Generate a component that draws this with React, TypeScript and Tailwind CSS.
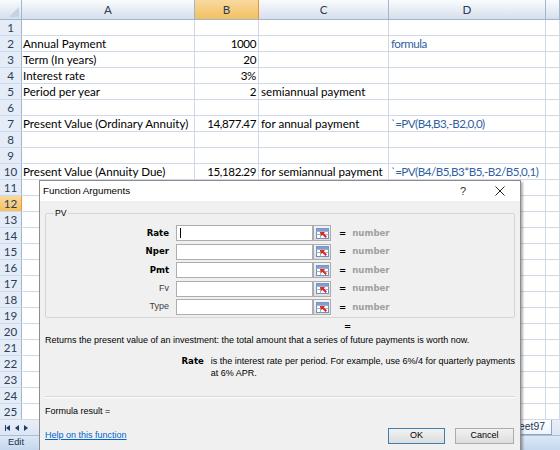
const rows: [string, string, string, string][] = [
  ['', '', '', ''],
  ['Annual Payment', '1000', '', 'formula'],
  ['Term (In years)', '20', '', ''],
  ['Interest rate', '3%', '', ''],
  ['Period per year', '2', 'semiannual payment', ''],
  ['', '', '', ''],
  ['Present Value (Ordinary Annuity)', '14,877.47', 'for annual payment', '`=PV(B4,B3,-B2,0,0)'],
  ['', '', '', ''],
  ['', '', '', ''],
  ['Present Value (Annuity Due)', '15,182.29', 'for semiannual payment', '`=PV(B4/B5,B3*B5,-B2/B5,0,1)'],
  ...Array.from({ length: 15 }, () => ['', '', '', ''] as [string, string, string, string]),
];

const args = [
  { name: 'Rate', bold: true },
  { name: 'Nper', bold: true },
  { name: 'Pmt', bold: true },
  { name: 'Fv', bold: false },
  { name: 'Type', bold: false },
];

function RefIcon() {
  return (
    <svg width="13" height="11" viewBox="0 0 13 11">
      <rect x="0.5" y="0.5" width="12" height="10" fill="#ffffff" stroke="#6f8fbf" />
      <line x1="0.5" y1="3.5" x2="12.5" y2="3.5" stroke="#9bb3d8" />
      <line x1="0.5" y1="6.5" x2="12.5" y2="6.5" stroke="#9bb3d8" />
      <line x1="4.5" y1="0.5" x2="4.5" y2="10.5" stroke="#9bb3d8" />
      <rect x="0.5" y="0.5" width="12" height="2.5" fill="#7e9fd0" />
      <polygon points="4,4 9,4 8,5.5 11,8.5 9.5,10 6.5,7 5,8" fill="#e02a1a" />
    </svg>
  );
}

function Tri({ dir }: { dir: 'l' | 'r' }) {
  return (
    <svg width="4" height="6" viewBox="0 0 4 6">
      {dir === 'l' ? <polygon points="4,0 4,6 0,3" fill="#1f3a66" /> : <polygon points="0,0 0,6 4,3" fill="#1f3a66" />}
    </svg>
  );
}

function Dialog() {
  const body = 'font-["Liberation_Sans",Arial,sans-serif] text-[9px] text-black';
  const bold = 'font-["DejaVu_Sans",Verdana,sans-serif] font-bold text-[8.6px]';
  return (
    <div className="absolute left-[39px] top-[180px] w-[482px] h-[280px] border border-[#8c8c8c] bg-[#f0f0f0] shadow-[2px_2px_2px_rgba(0,0,0,0.3)]">
      <div className="h-[20px] bg-white flex items-center pl-[3px] font-['Liberation_Sans',Arial,sans-serif] text-[9.8px] text-black">
        <span>Function Arguments</span>
        <span className="ml-auto text-[11px] text-[#333]">?</span>
        <svg className="ml-[29px] mr-[15px]" width="10" height="10" viewBox="0 0 10 10">
          <path d="M0.5 0.5 L9.5 9.5 M9.5 0.5 L0.5 9.5" stroke="#222" strokeWidth="1" />
        </svg>
      </div>
      <div className={`px-[5px] ${body}`}>
        <fieldset className="mt-[7px] border border-[#d5d5d5] rounded-[2px] pl-[5px] pt-[7px] pb-[2px]">
          <legend className="ml-[3px] px-[1px] leading-[10px] text-[8.7px]">PV</legend>
          <div className="flex flex-col gap-[2.5px]">
            {args.map((a) => (
              <div key={a.name} className="flex items-center h-[16px]">
                <div className={`w-[118px] text-right ${a.bold ? bold + ' text-black' : 'text-[#404040]'}`}>{a.name}</div>
                <div className="ml-[7px] w-[137px] h-[16px] bg-white border border-[#abadb3] flex items-center pl-[3px]">
                  {a.name === 'Rate' && <div className="w-px h-[10px] bg-black" />}
                </div>
                <div className="w-[18px] h-[16px] border border-[#acacac] bg-gradient-to-b from-[#f4f4f4] to-[#dedede] flex items-center justify-center">
                  <RefIcon />
                </div>
                <span className={`ml-[8px] ${bold}`}>=</span>
                <span className={`ml-[6px] ${bold} text-[#a0a0a0]`}>number</span>
              </div>
            ))}
          </div>
        </fieldset>
        <div className="h-[16px] flex items-center pl-[299px]">
          <span className={bold}>=</span>
        </div>
        <div className="h-[14px] flex items-center whitespace-nowrap">
          Returns the present value of an investment: the total amount that a series of future payments is worth now.
        </div>
        <div className="mt-[7px] flex leading-[12px]">
          <div className={`w-[159px] text-right ${bold}`}>Rate</div>
          <div className="ml-[7px] whitespace-nowrap">
            <div>is the interest rate per period. For example, use 6%/4 for quarterly payments</div>
            <div>at 6% APR.</div>
          </div>
        </div>
        <div className="mt-[17px] border-t border-[#d7d7d7] border-b-white border-b h-[2px]" />
        <div className="mt-[8px] h-[12px] flex items-center">Formula result =</div>
        <div className="mt-[10px] h-[16px] flex items-center">
          <span className="text-[#0066cc] underline">Help on this function</span>
          <button className="ml-auto w-[57px] h-[16px] border border-[#3c7fb1] bg-gradient-to-b from-[#f2f2f2] to-[#dddddd] text-[9px]">OK</button>
          <button className="ml-[10px] mr-[1px] w-[59px] h-[16px] border border-[#acacac] bg-gradient-to-b from-[#f2f2f2] to-[#dddddd] text-[9px]">Cancel</button>
        </div>
      </div>
    </div>
  );
}

export default function App() {
  const hdr = 'h-full flex items-center justify-center border-r border-[#9eb6ce] bg-gradient-to-b from-[#f9fcfd] to-[#d6dfec] text-[#2c3d55]';
  const cell = 'h-full border-r border-[#d0d7e5] flex items-center whitespace-nowrap overflow-visible';
  return (
    <div className="relative w-[560px] h-[450px] overflow-hidden bg-white font-['Lato','Liberation_Sans',sans-serif] text-[11.6px] text-black">
      {/* column headers */}
      <div className="flex h-[20px] border-b border-[#9eb6ce]">
        <div className="w-[22px] h-full border-r border-[#9eb6ce] bg-gradient-to-b from-[#f9fcfd] to-[#d6dfec] flex items-end justify-end p-[2px]">
          <svg width="10" height="10" viewBox="0 0 10 10">
            <polygon points="10,0 10,10 0,10" fill="#c3d2e4" />
          </svg>
        </div>
        <div className={`w-[173px] ${hdr}`}>A</div>
        <div className="w-[64px] h-full flex items-center justify-center border-r border-[#f29436] bg-gradient-to-b from-[#f9d99f] to-[#f1c15f] text-[#2c3d55]">B</div>
        <div className={`w-[130px] ${hdr}`}>C</div>
        <div className={`w-[157px] ${hdr}`}>D</div>
        <div className={`flex-1 ${hdr}`} />
      </div>

      {/* rows */}
      {rows.map((r, i) => (
        <div key={i} className="flex h-[16px] border-b border-[#d0d7e5]">
          <div
            className={
              i === 11
                ? 'w-[22px] h-full flex items-center justify-center border-r border-[#f29436] bg-gradient-to-b from-[#f9d99f] to-[#f1c15f] text-[#2c3d55]'
                : 'w-[22px] h-full flex items-center justify-center border-r border-[#9eb6ce] bg-[#e4ecf7] text-[#2c3d55]'
            }
          >
            {i + 1}
          </div>
          <div className={`w-[173px] pl-[1px] ${cell}`}>{r[0]}</div>
          <div className={`w-[64px] pr-[2px] justify-end tracking-[-0.4px] ${cell}`}>{r[1]}</div>
          <div className={`w-[130px] pl-[2px] ${cell}`}>{r[2]}</div>
          <div className={`w-[157px] pl-[2px] text-[#2f5f9f] tracking-[-0.5px] ${cell}`}>{r[3]}</div>
          <div className={`flex-1 ${cell}`} />
        </div>
      ))}

      {/* sheet tabs */}
      <div className="h-[16px] flex items-center bg-gradient-to-b from-[#e9eff8] to-[#dbe5f3] border-b border-[#a9bfd6]">
        <div className="flex items-center gap-[5px] pl-[5px]">
          <div className="flex items-center">
            <div className="w-px h-[6px] bg-[#1f3a66]" />
            <Tri dir="l" />
          </div>
          <Tri dir="l" />
          <Tri dir="r" />
        </div>
        <div className="ml-auto mr-[8px] h-full flex items-center px-[6px] bg-gradient-to-b from-white to-[#eef3fa] border border-t-0 border-[#8ba6c8] font-['Liberation_Sans',Arial,sans-serif] text-[10.4px] text-[#1e395b]">
          Sheet97
        </div>
      </div>

      {/* status bar */}
      <div className="h-[14px] flex items-center pl-[8px] bg-gradient-to-b from-[#dbe7f6] to-[#c5d8ef] font-['Liberation_Sans',Arial,sans-serif] text-[9.3px] text-[#1e2f45]">
        Edit
      </div>

      <Dialog />
    </div>
  );
}
